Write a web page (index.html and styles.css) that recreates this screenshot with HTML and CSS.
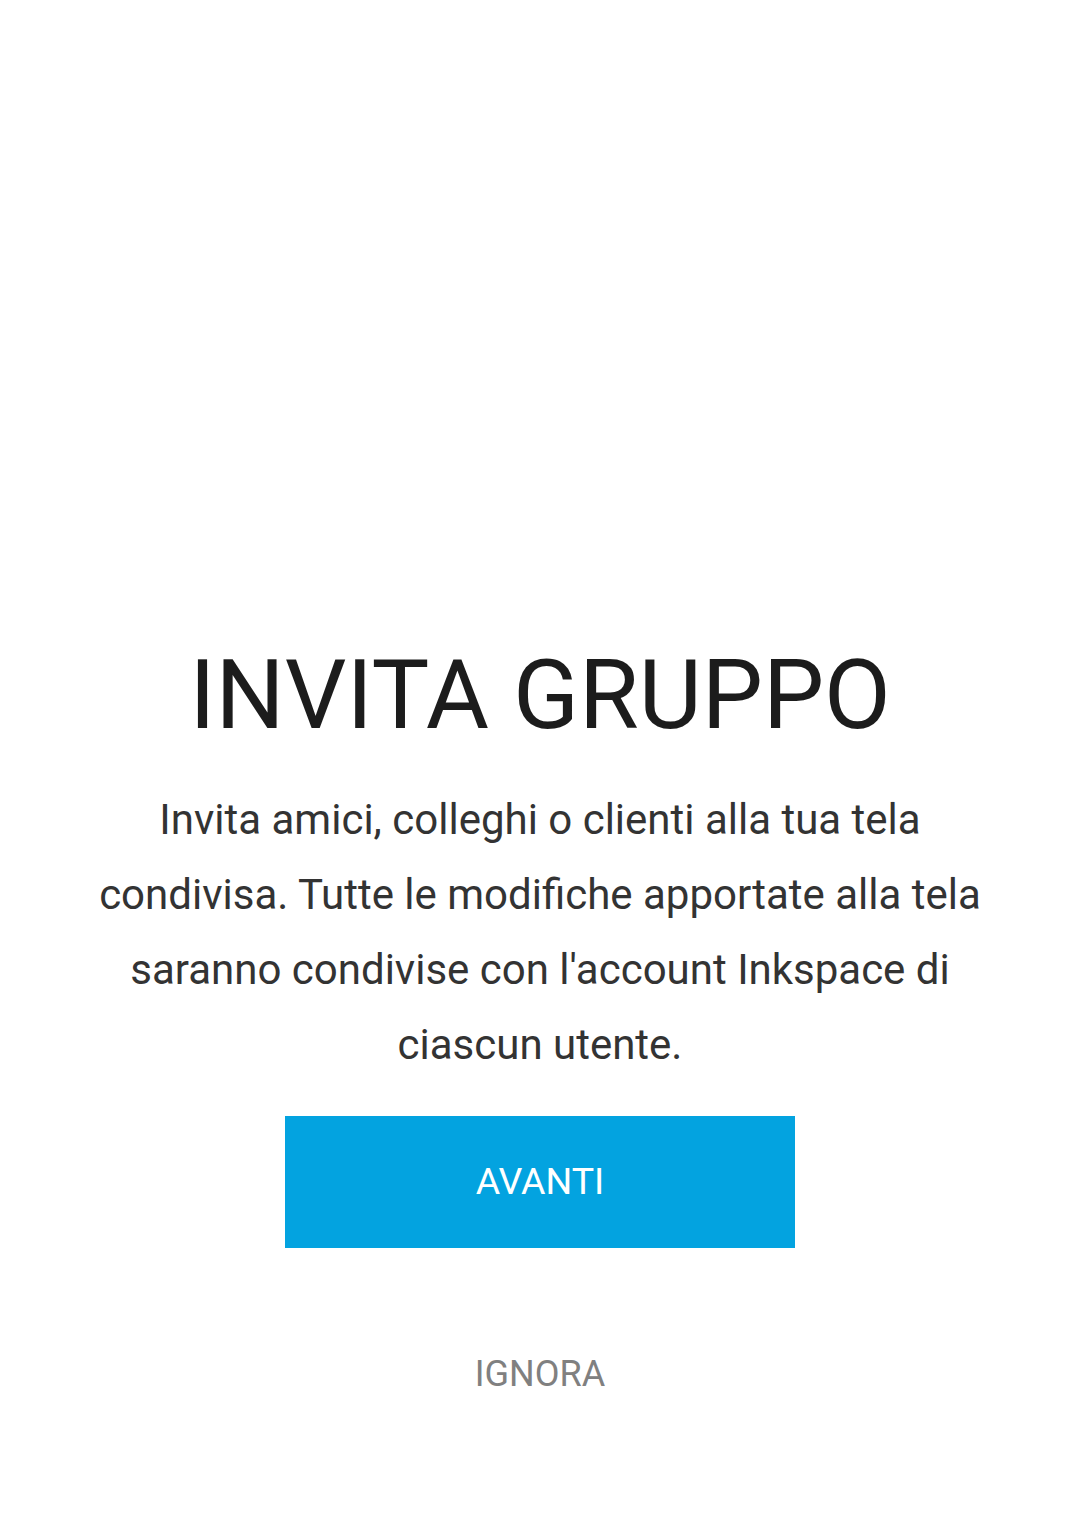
FILE: index.html
```html
<!DOCTYPE html>
<html lang="it">
<head>
<meta charset="utf-8">
<title>Invita gruppo</title>
<link rel="stylesheet" href="styles.css">
</head>
<body>
<main class="screen">
  <h1 class="title">INVITA GRUPPO</h1>
  <p class="desc">Invita amici, colleghi o clienti alla tua tela condivisa. Tutte le modifiche apportate alla tela saranno condivise con l'account Inkspace di ciascun utente.</p>
  <div class="actions">
    <button class="btn btn-primary">AVANTI</button>
    <button class="btn btn-ghost">IGNORA</button>
  </div>
</main>
</body>
</html>
```
FILE: styles.css
```css
html, body {
  margin: 0;
  padding: 0;
  background: #ffffff;
}
body {
  width: 1080px;
  height: 1533px;
  overflow: hidden;
  font-family: Roboto, "Liberation Sans", sans-serif;
}
.screen {
  display: flex;
  flex-direction: column;
  align-items: center;
  padding-top: 639px;
}
.title {
  margin: 0;
  font-size: 97px;
  font-weight: 400;
  line-height: 112px;
  color: #1c1c1c;
  letter-spacing: 0;
}
.desc {
  margin: 31px 0 0;
  width: 920px;
  font-size: 42px;
  line-height: 75px;
  color: #333333;
  text-align: center;
}
.actions {
  margin-top: 34px;
  display: flex;
  flex-direction: column;
  align-items: center;
  gap: 59px;
}
.btn {
  width: 510px;
  height: 132px;
  border: 0;
  border-radius: 0;
  padding: 0;
  font-family: Roboto, "Liberation Sans", sans-serif;
  font-size: 36px;
  font-weight: 400;
  display: flex;
  align-items: center;
  justify-content: center;
}
.btn-primary {
  background: #03a3e0;
  color: #ffffff;
  font-size: 37.5px;
  padding-bottom: 2px;
}
.btn-ghost {
  background: transparent;
  color: #808080;
  padding-top: 2px;
}
```
